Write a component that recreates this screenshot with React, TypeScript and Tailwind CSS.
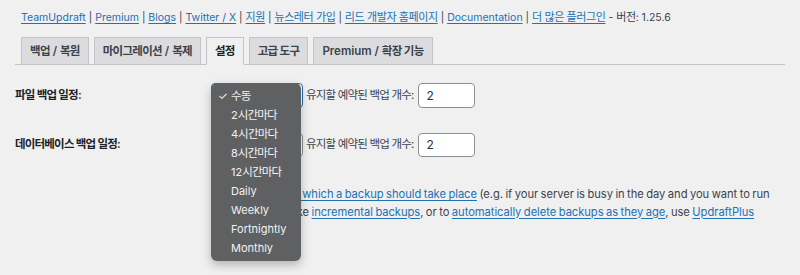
import React from "react";

const font = { fontFamily: 'Inter, "Noto Sans CJK KR", sans-serif' };

function T({ text, k }: { text: string; k: string }) {
  const parts = text.split(/([\uAC00-\uD7A3]+(?: [\uAC00-\uD7A3]+)*)/);
  return (
    <>
      {parts.map((p, i) =>
        /[\uAC00-\uD7A3]/.test(p) ? (
          <span key={i} className={k}>
            {p}
          </span>
        ) : (
          <React.Fragment key={i}>{p}</React.Fragment>
        )
      )}
    </>
  );
}

const KT = "text-[11px] tracking-[-0.4px]";
const KB = "text-[11.5px] tracking-[-0.8px]";
const KTab = "text-[11.5px] tracking-[-0.7px]";

function A({ children }: { children: React.ReactNode }) {
  return <span className="text-[#2271b1] underline underline-offset-2 decoration-[1px]">{children}</span>;
}

function Tab({ label, active }: { label: string; active?: boolean }) {
  return (
    <div
      className={
        "mr-[5px] -mb-px border border-[#c3c4c7] px-[8px] py-[3px] text-[11.5px] leading-[20px] font-semibold " +
        (active ? "bg-[#f0f0f1] border-b-[#f0f0f1] text-[#1d2327]" : "bg-[#dcdcde] text-[#3c434a]")
      }
    >
      <T text={label} k={KTab} />
    </div>
  );
}

const items = ["수동", "2시간마다", "4시간마다", "8시간마다", "12시간마다", "Daily", "Weekly", "Fortnightly", "Monthly"];

export default function App() {
  return (
    <div className="relative h-[275px] w-[800px] overflow-hidden bg-[#f0f0f1] text-[#3c434a]" style={font}>
      <div className="px-[15px]">
        <div className="pl-[6px] pt-[8px] text-[10.5px] leading-[18px] whitespace-nowrap text-[#3c434a]">
          <A>TeamUpdraft</A> | <A>Premium</A> | <A>Blogs</A> | <A>Twitter / X</A> | <A><T text="지원" k={KT} /></A> |{" "}
          <A><T text="뉴스레터 가입" k={KT} /></A> | <A><T text="리드 개발자 홈페이지" k={KT} /></A> | <A>Documentation</A> |{" "}
          <A><T text="더 많은 플러그인" k={KT} /></A> - <T text="버전" k={KT} />: 1.25.6
        </div>
        <div className="mt-[10px] flex border-b border-[#c3c4c7] pl-[6px]">
          <Tab label="백업 / 복원" />
          <Tab label="마이그레이션 / 복제" />
          <Tab label="설정" active />
          <Tab label="고급 도구" />
          <Tab label="Premium / 확장 기능" />
        </div>

        <div className="mt-[18px] flex h-[25px] items-center">
          <div className="w-[196px] text-[11.5px] font-semibold text-[#1d2327]">
            <T text="파일 백업 일정:" k={KB} />
          </div>
          <div className="h-[25px] w-[92px] rounded-[4px] border border-[#2271b1] bg-white"></div>
          <div className="ml-[3px] text-[11.5px] text-[#3c434a]">
            <T text="유지할 예약된 백업 개수:" k={KB} />
          </div>
          <div className="ml-[4px] flex h-[25px] w-[57px] items-center rounded-[4px] border border-[#8c8f94] bg-white pl-[7px] text-[12px] text-[#2c3338]">
            2
          </div>
        </div>

        <div className="mt-[25px] flex h-[24px] items-center">
          <div className="w-[196px] text-[11.5px] font-semibold text-[#1d2327]">
            <T text="데이터베이스 백업 일정:" k={KB} />
          </div>
          <div className="h-[24px] w-[92px] rounded-[4px] border border-[#8c8f94] bg-white"></div>
          <div className="ml-[3px] text-[11.5px] text-[#3c434a]">
            <T text="유지할 예약된 백업 개수:" k={KB} />
          </div>
          <div className="ml-[4px] flex h-[24px] w-[57px] items-center rounded-[4px] border border-[#8c8f94] bg-white pl-[7px] text-[12px] text-[#2c3338]">
            2
          </div>
        </div>

        <div className="ml-[200px] mt-[29px] w-[582px] text-[11.2px] leading-[17.5px] tracking-[-0.05px] [word-spacing:-0.6px] text-[#3c434a]">
          To <A>fix the time at which a backup should take place</A> (e.g. if your server is busy in the day and you want to run
          overnight), to take <A>incremental backups</A>, or to <A>automatically delete backups as they age</A>, use{" "}
          <A>UpdraftPlus Premium</A>.
        </div>
      </div>

      <div className="absolute left-[211px] top-[83px] w-[90px] rounded-[6px] bg-[#5f6062] pt-[4px] pb-[3px] text-[11px] text-[#f2f2f2] shadow-[0_4px_10px_rgba(0,0,0,0.25)]">
        {items.map((it, i) => (
          <div key={it} className="flex h-[19px] items-center">
            <span className="w-[20px] pl-[7px] text-[11px]">{i === 0 ? "✓" : ""}</span>
            <span>
              <T text={it} k={KB} />
            </span>
          </div>
        ))}
      </div>
    </div>
  );
}
